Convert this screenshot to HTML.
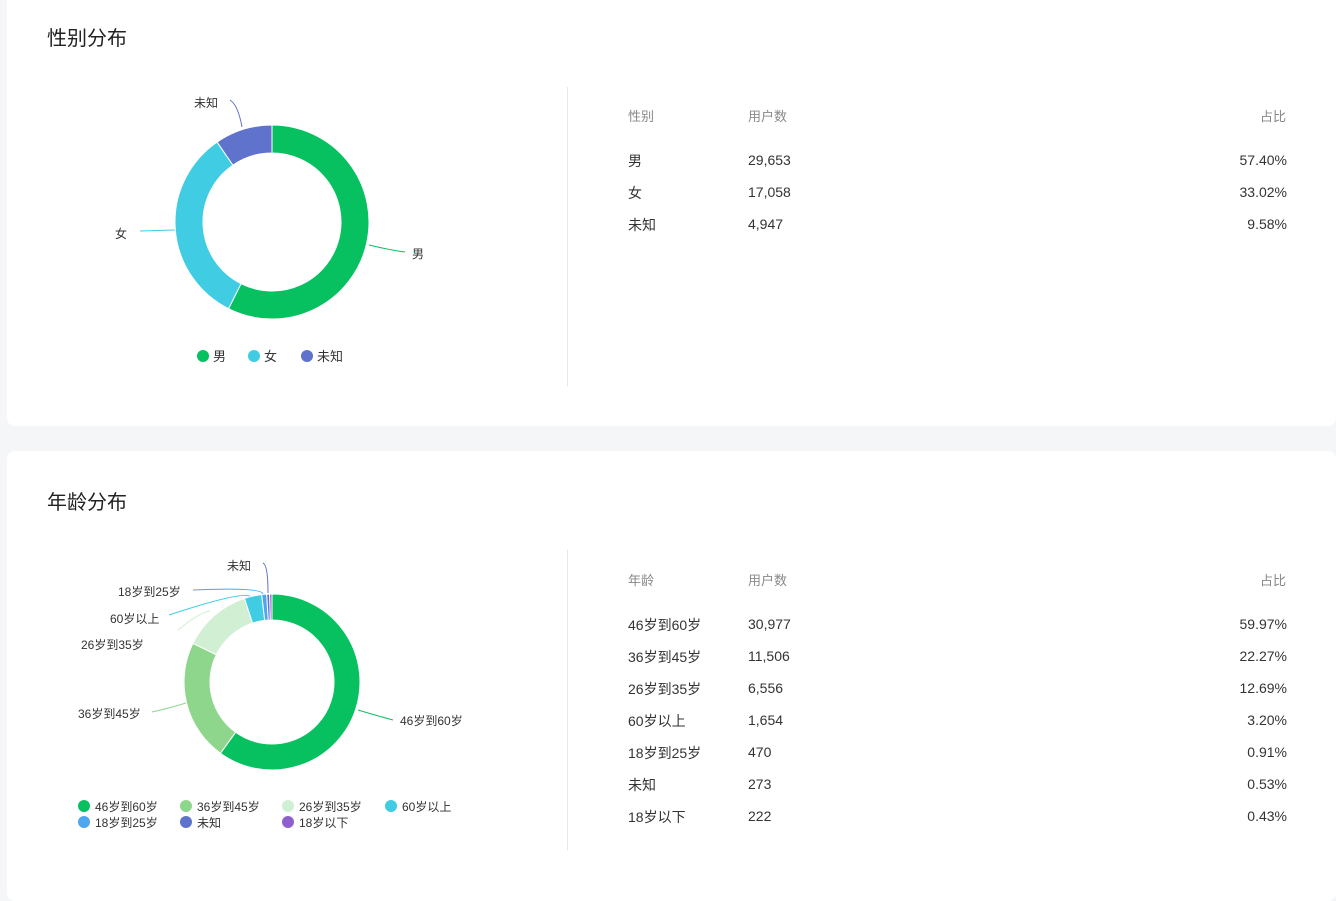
<!DOCTYPE html>
<html><head><meta charset="utf-8"><style>
body{margin:0;width:1336px;height:887px;background:#f5f6f8;position:relative;overflow:hidden;font-family:"Liberation Sans","Noto Sans CJK SC",sans-serif;color:#333}
.card{position:absolute;left:7px;right:0;background:#fff;border-radius:8px}
.t{position:absolute;white-space:nowrap}
.h{font-size:20px;color:#222}
.th{font-size:13px;color:#888}
.td{font-size:14px;color:#333}
.l{font-size:12px;color:#333}
.div{position:absolute;left:567px;width:1px;background:#e8e8e8}
svg{position:absolute;left:0;top:0}
</style></head><body>
<div class="card" style="top:-10px;height:436px"></div>
<div class="card" style="top:451px;height:450px"></div>
<div class="t h" style="left:47px;top:22px">性别分布</div>
<div class="t h" style="left:47px;top:486px">年龄分布</div>
<div class="div" style="top:87px;height:299px"></div>
<div class="div" style="top:550px;height:300px"></div>

<div class="t th" style="left:628px;top:106px">性别</div>
<div class="t th" style="left:748px;top:106px">用户数</div>
<div class="t th" style="left:1260px;top:106px">占比</div>
<div class="t td" style="left:628px;top:151px">男</div><div class="t td" style="left:748px;top:152px">29,653</div><div class="t td" style="right:49px;top:152px">57.40%</div>
<div class="t td" style="left:628px;top:183px">女</div><div class="t td" style="left:748px;top:184px">17,058</div><div class="t td" style="right:49px;top:184px">33.02%</div>
<div class="t td" style="left:628px;top:215px">未知</div><div class="t td" style="left:748px;top:216px">4,947</div><div class="t td" style="right:49px;top:216px">9.58%</div>

<div class="t th" style="left:628px;top:570px">年龄</div>
<div class="t th" style="left:748px;top:570px">用户数</div>
<div class="t th" style="left:1260px;top:570px">占比</div>
<div class="t td" style="left:628px;top:615px">46岁到60岁</div><div class="t td" style="left:748px;top:616px">30,977</div><div class="t td" style="right:49px;top:616px">59.97%</div>
<div class="t td" style="left:628px;top:647px">36岁到45岁</div><div class="t td" style="left:748px;top:648px">11,506</div><div class="t td" style="right:49px;top:648px">22.27%</div>
<div class="t td" style="left:628px;top:679px">26岁到35岁</div><div class="t td" style="left:748px;top:680px">6,556</div><div class="t td" style="right:49px;top:680px">12.69%</div>
<div class="t td" style="left:628px;top:711px">60岁以上</div><div class="t td" style="left:748px;top:712px">1,654</div><div class="t td" style="right:49px;top:712px">3.20%</div>
<div class="t td" style="left:628px;top:743px">18岁到25岁</div><div class="t td" style="left:748px;top:744px">470</div><div class="t td" style="right:49px;top:744px">0.91%</div>
<div class="t td" style="left:628px;top:775px">未知</div><div class="t td" style="left:748px;top:776px">273</div><div class="t td" style="right:49px;top:776px">0.53%</div>
<div class="t td" style="left:628px;top:807px">18岁以下</div><div class="t td" style="left:748px;top:808px">222</div><div class="t td" style="right:49px;top:808px">0.43%</div>

<svg id="s" width="1336" height="887" fill="none">
<g stroke-width="1">
<path d="M369 245 Q390 250 405 252" stroke="#07c160"/>
<path d="M175 230 L140 231" stroke="#40cde3"/>
<path d="M242 127 Q238 105 230 100" stroke="#5f72cc"/>
<path d="M358 710 Q378 716 393 720" stroke="#07c160"/>
<path d="M186 703 Q170 708 152 712" stroke="#8fd68d"/>
<path d="M210 611 Q200 612 178 630" stroke="#d1efd3"/>
<path d="M251 597 Q245 590 169 615" stroke="#40cde3"/>
<path d="M263 594 Q262 587 193 590" stroke="#4ea6ef"/>
<path d="M268 593 Q268 565 263 563" stroke="#5f72cc"/>
</g>
<g font-size="12" fill="#333" font-family="Liberation Sans,Noto Sans CJK SC,sans-serif">
<text x="412" y="258">男</text><text x="115" y="238">女</text><text x="194" y="107">未知</text>
<text x="400" y="725">46岁到60岁</text><text x="78" y="718">36岁到45岁</text><text x="81" y="649">26岁到35岁</text>
<text x="110" y="623">60岁以上</text><text x="118" y="596">18岁到25岁</text><text x="227" y="570">未知</text>
</g>
<g font-size="13" fill="#333" font-family="Liberation Sans,Noto Sans CJK SC,sans-serif">
<circle cx="203" cy="356" r="6" fill="#07c160"/><text x="213" y="361">男</text>
<circle cx="254" cy="356" r="6" fill="#40cde3"/><text x="264" y="361">女</text>
<circle cx="307" cy="356" r="6" fill="#5f72cc"/><text x="317" y="361">未知</text>
</g>
<g font-size="12" fill="#333" font-family="Liberation Sans,Noto Sans CJK SC,sans-serif">
<circle cx="84" cy="806" r="6" fill="#07c160"/><text x="95" y="811">46岁到60岁</text>
<circle cx="186" cy="806" r="6" fill="#8fd68d"/><text x="197" y="811">36岁到45岁</text>
<circle cx="288" cy="806" r="6" fill="#d1efd3"/><text x="299" y="811">26岁到35岁</text>
<circle cx="391" cy="806" r="6" fill="#40cde3"/><text x="402" y="811">60岁以上</text>
<circle cx="84" cy="822" r="6" fill="#4ea6ef"/><text x="95" y="827">18岁到25岁</text>
<circle cx="186" cy="822" r="6" fill="#5f72cc"/><text x="197" y="827">未知</text>
<circle cx="288" cy="822" r="6" fill="#8f5fcf"/><text x="299" y="827">18岁以下</text>
</g>
</svg>
<script>
function donut(cx,cy,R,r,data){var s=document.getElementById('s'),a=0;data.forEach(function(d){var b=a+d[0]/100*2*Math.PI;
function p(rad,t){return [cx+rad*Math.sin(t),cy-rad*Math.cos(t)]}
var p1=p(R,a),p2=p(R,b),p3=p(r,b),p4=p(r,a),lg=(b-a)>Math.PI?1:0;
var e=document.createElementNS('http://www.w3.org/2000/svg','path');
e.setAttribute('d','M'+p1+' A'+R+' '+R+' 0 '+lg+' 1 '+p2+' L'+p3+' A'+r+' '+r+' 0 '+lg+' 0 '+p4+' Z');
e.setAttribute('fill',d[1]);e.setAttribute('stroke','#fff');e.setAttribute('stroke-width','1');s.appendChild(e);a=b;});}
donut(272,222,97,69,[[57.40,'#07c160'],[33.02,'#40cde3'],[9.58,'#5f72cc']]);
donut(272,682,88,62,[[59.97,'#07c160'],[22.27,'#8fd68d'],[12.69,'#d1efd3'],[3.20,'#40cde3'],[0.91,'#4ea6ef'],[0.53,'#5f72cc'],[0.43,'#8f5fcf']]);
</script>
</body></html>
